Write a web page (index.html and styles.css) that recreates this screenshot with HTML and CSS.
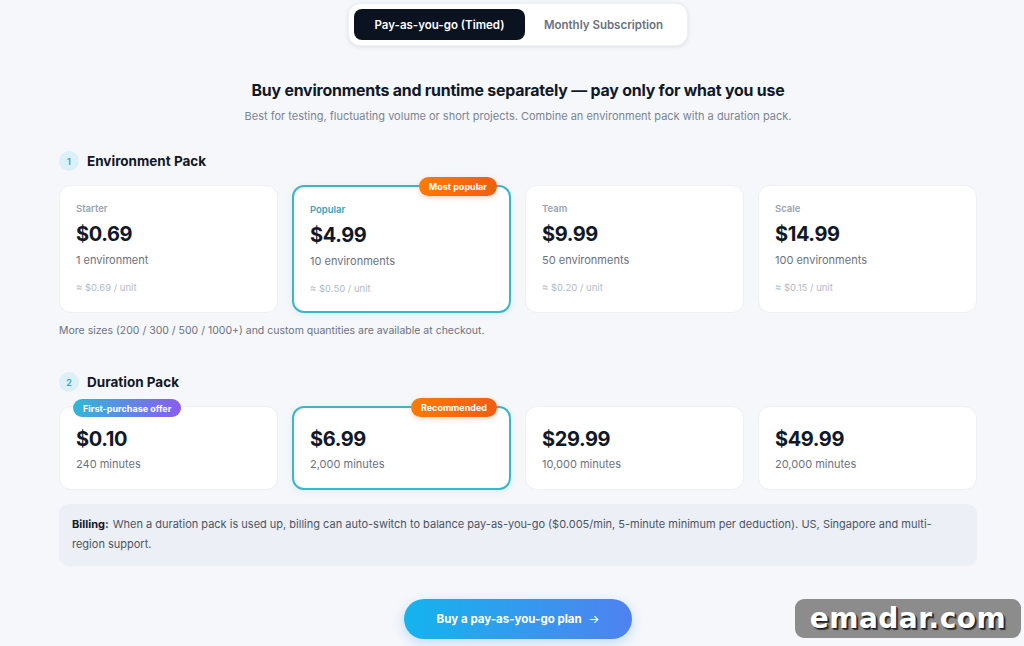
FILE: index.html
```html
<!DOCTYPE html>
<html lang="en">
<head>
<meta charset="utf-8">
<title>Pricing</title>
<link rel="stylesheet" href="styles.css">
</head>
<body>
<div class="page">
  <div class="toggle-row">
    <div class="toggle">
      <button class="tab active">Pay-as-you-go (Timed)</button>
      <button class="tab">Monthly Subscription</button>
    </div>
  </div>

  <h1 class="headline">Buy environments and runtime separately — pay only for what you use</h1>
  <p class="sub">Best for testing, fluctuating volume or short projects. Combine an environment pack with a duration pack.</p>

  <div class="section-title"><span class="num">1</span><span>Environment Pack</span></div>
  <div class="grid env">
    <div class="card">
      <div class="tier">Starter</div>
      <div class="price">$0.69</div>
      <div class="qty">1 environment</div>
      <div class="unit">≈ $0.69 / unit</div>
    </div>
    <div class="card featured">
      <span class="badge orange">Most popular</span>
      <div class="tier accent">Popular</div>
      <div class="price">$4.99</div>
      <div class="qty">10 environments</div>
      <div class="unit">≈ $0.50 / unit</div>
    </div>
    <div class="card">
      <div class="tier">Team</div>
      <div class="price">$9.99</div>
      <div class="qty">50 environments</div>
      <div class="unit">≈ $0.20 / unit</div>
    </div>
    <div class="card">
      <div class="tier">Scale</div>
      <div class="price">$14.99</div>
      <div class="qty">100 environments</div>
      <div class="unit">≈ $0.15 / unit</div>
    </div>
  </div>
  <p class="note">More sizes (200 / 300 / 500 / 1000+) and custom quantities are available at checkout.</p>

  <div class="section-title second"><span class="num">2</span><span>Duration Pack</span></div>
  <div class="grid dur">
    <div class="card">
      <span class="badge purple">First-purchase offer</span>
      <div class="price">$0.10</div>
      <div class="qty">240 minutes</div>
    </div>
    <div class="card featured">
      <span class="badge orange">Recommended</span>
      <div class="price">$6.99</div>
      <div class="qty">2,000 minutes</div>
    </div>
    <div class="card">
      <div class="price">$29.99</div>
      <div class="qty">10,000 minutes</div>
    </div>
    <div class="card">
      <div class="price">$49.99</div>
      <div class="qty">20,000 minutes</div>
    </div>
  </div>

  <p class="billing"><b class="billing-label">Billing:</b>When a duration pack is used up, billing can auto-switch to balance pay-as-you-go ($0.005/min, 5-minute minimum per deduction). US, Singapore and multi-&#8203;region support.</p>

  <div class="cta-row">
    <button class="cta">Buy a pay-as-you-go plan <span class="arrow">→</span></button>
  </div>
</div>
<div class="watermark">emadar.com</div>
</body>
</html>
```

FILE: styles.css
```css
* { box-sizing: border-box; }
html, body { margin: 0; padding: 0; }
body {
  background: #f5f7fa;
  font-family: "Inter", "Liberation Sans", sans-serif;
  color: #111827;
  width: 1024px;
  height: 646px;
  overflow: hidden;
  position: relative;
}
.page {
  width: 918px;
  margin-left: 59px;
  padding-top: 3px;
}
.toggle-row { display: flex; justify-content: center; }
.toggle {
  display: flex;
  align-items: center;
  gap: 0;
  background: #fff;
  border-radius: 12px;
  padding: 5px 5px;
  box-shadow: 0 1px 4px rgba(15, 23, 42, 0.10);
  border: 1px solid #edf0f4;
}
.tab {
  font-family: inherit;
  border: 0;
  background: transparent;
  font-size: 11.5px;
  font-weight: 600;
  color: #6b7280;
  height: 31px;
  width: 157px;
  padding: 0;
  border-radius: 8px;
  cursor: pointer;
}
.tab.active {
  background: #0b1220;
  color: #fff;
  width: 171px;
}
.headline {
  margin: 34px 0 0;
  text-align: center;
  font-size: 15.9px;
  font-weight: 700;
  letter-spacing: -0.2px;
  line-height: 22px;
}
.sub {
  margin: 6px 0 0;
  text-align: center;
  font-size: 11px;
  color: #7b8494;
  line-height: 16px;
}
.section-title {
  display: flex;
  align-items: center;
  gap: 8px;
  font-size: 13.5px;
  font-weight: 700;
  margin-top: 26px;
  height: 22px;
}
.section-title.second { margin-top: 33px; }
.num {
  width: 20px;
  height: 20px;
  border-radius: 50%;
  background: #dcf0f7;
  color: #3d9dc0;
  font-size: 9px;
  font-weight: 600;
  display: flex;
  align-items: center;
  justify-content: center;
}
.grid {
  display: grid;
  grid-template-columns: repeat(4, 1fr);
  gap: 14px;
  margin-top: 13px;
}
.card {
  position: relative;
  background: #fff;
  border: 1px solid #eef0f4;
  border-radius: 12px;
  padding: 16px 16px 0;
  height: 128px;
}
.grid.dur .card { height: 84px; padding-top: 20px; }
.card.featured {
  border: 2px solid #3bb6c9;
  box-shadow: 0 2px 6px rgba(59, 182, 201, 0.12);
}
.grid.dur .card.featured { padding-top: 19px; }
.tier {
  font-size: 9.5px;
  font-weight: 600;
  color: #9aa3b0;
  line-height: 13px;
}
.tier.accent { color: #3d9dc0; }
.price {
  font-size: 20px;
  font-weight: 700;
  letter-spacing: -0.4px;
  line-height: 24px;
  margin-top: 7px;
  color: #111827;
}
.grid.dur .price { margin-top: 0; }
.qty {
  font-size: 11px;
  color: #6b7280;
  margin-top: 7px;
  line-height: 14px;
}
.grid.dur .qty { margin-top: 6px; }
.unit {
  font-size: 9.5px;
  color: #b3bac5;
  margin-top: 14px;
  line-height: 13px;
}
.badge {
  position: absolute;
  top: -8px;
  right: 13px;
  height: 19px;
  padding: 0 10px;
  border-radius: 10px;
  font-size: 9px;
  font-weight: 700;
  color: #fff;
  display: flex;
  align-items: center;
  white-space: nowrap;
}
.card.featured .badge { top: -10px; right: 12px; }
.badge.orange {
  background: linear-gradient(90deg, #ff7a00, #f25c14);
  box-shadow: 0 2px 5px rgba(242, 92, 20, 0.25);
}
.badge.purple {
  background: linear-gradient(90deg, #30b8d8, #8a5cf0);
  right: auto;
  left: 13px;
  height: 18px;
}
.note {
  margin: 11px 0 0;
  font-size: 10.5px;
  color: #6b7280;
  line-height: 14px;
}
.billing {
  margin: 14px 0 0;
  background: #eceff6;
  border-radius: 10px;
  padding: 10px 26px 11px 13px;
  font-size: 11px;
  line-height: 20px;
  color: #4b5563;
  box-shadow: 0 1px 2px rgba(15, 23, 42, 0.04);
}
.billing-label { color: #111827; font-weight: 700; margin-right: 4px; }
.cta-row {
  display: flex;
  justify-content: center;
  margin-top: 34px;
}
.cta {
  font-family: inherit;
  border: 0;
  height: 40px;
  width: 228px;
  border-radius: 20px;
  background: linear-gradient(90deg, #14b4ee, #4f82f0);
  color: #fff;
  font-size: 11.5px;
  font-weight: 700;
  box-shadow: 0 4px 12px rgba(40, 140, 240, 0.25);
  cursor: pointer;
}
.arrow { margin-left: 4px; font-weight: 400; }
.watermark {
  position: absolute;
  left: 795px;
  top: 599px;
  width: 226px;
  height: 39px;
  border-radius: 9px;
  background: #8c8c8c;
  color: #fff;
  font-family: "DejaVu Sans", sans-serif;
  font-weight: 700;
  font-size: 28px;
  line-height: 39px;
  text-align: center;
  letter-spacing: 0.5px;
  text-shadow: 1px 1px 0 #222, 2px 2px 1px #333;
}
```
